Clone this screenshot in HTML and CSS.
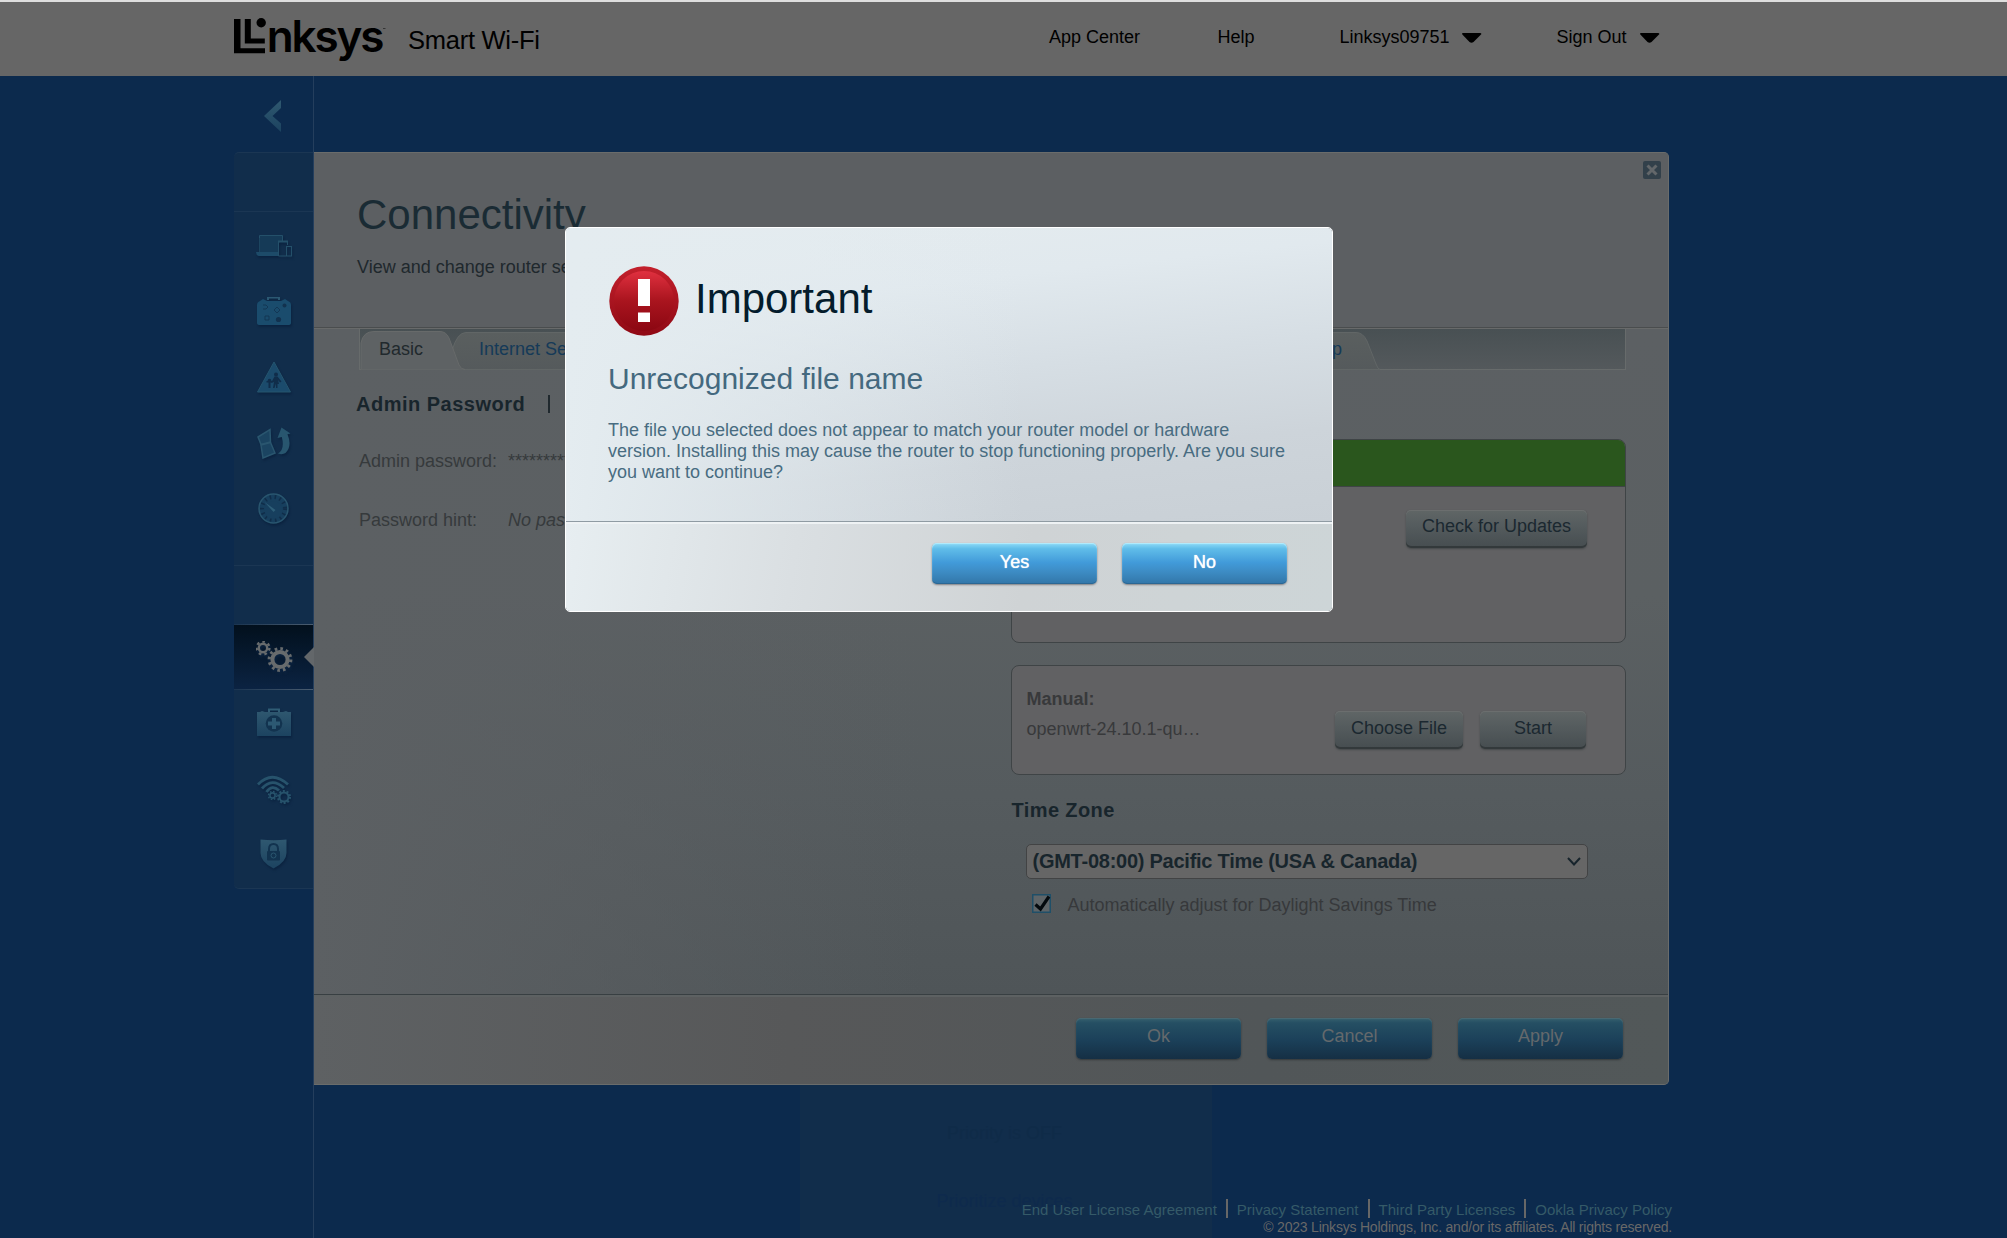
FILE: index.html
```html
<!DOCTYPE html>
<html lang="en">
<head>
<meta charset="utf-8">
<title>Linksys Smart Wi-Fi</title>
<link rel="stylesheet" href="styles.css">
</head>
<body>
<svg class="defs" width="0" height="0" aria-hidden="true">
  <defs>
    <linearGradient id="ico" x1="0" y1="0" x2="0" y2="1"><stop offset="0" stop-color="#2f5870"/><stop offset="1" stop-color="#1c4360"/></linearGradient>
    <linearGradient id="red" x1="0" y1="0" x2="0" y2="1"><stop offset="0" stop-color="#e0303f"/><stop offset=".5" stop-color="#a9141e"/><stop offset="1" stop-color="#8b0712"/></linearGradient>
    <linearGradient id="redRim" x1="0" y1="0" x2="0" y2="1"><stop offset="0" stop-color="#c3202c"/><stop offset="1" stop-color="#8f0914"/></linearGradient>
    <linearGradient id="tabFill" x1="0" y1="0" x2="0" y2="1"><stop offset="0" stop-color="#5a5f5f"/><stop offset="1" stop-color="#555a5c"/></linearGradient>
  </defs>
</svg>

<header class="topbar">
  <div class="wrap">
    <svg class="logo" width="310" height="56" viewBox="0 0 310 56">
      <path d="M0 11h6.500v29.300H31v5H0z M10.800 11h6v19.600h14v5h-20z"/>
      <circle cx="27.200" cy="14.800" r="4.700"/>
      <text class="brand" x="32.800" y="44.300" textLength="117.500" lengthAdjust="spacing">nksys</text>
      <path d="M149 20.200h2.500v.8H149z" opacity=".6"/>
      <text class="product" x="174" y="40.700" textLength="132">Smart Wi-Fi</text>
    </svg>
    <nav class="topnav">
      <a class="nav-app">App Center</a>
      <a class="nav-help">Help</a>
      <a class="nav-user">Linksys09751 <svg width="20" height="10"><path d="M0 1Q0 0 1 0H18Q20 0 19 1.500L11.500 9Q9.500 10.500 7.500 9L.8 2z"/></svg></a>
      <a class="nav-out">Sign Out <svg width="20" height="10"><path d="M0 1Q0 0 1 0H18Q20 0 19 1.500L11.500 9Q9.500 10.500 7.500 9L.8 2z"/></svg></a>
    </nav>
  </div>
</header>

<div class="widget">
  <p class="widget-state">Priority is OFF</p>
  <p class="widget-link">Prioritize devices</p>
</div>

<main class="wrap app">
  <aside class="side">
    <div class="back"><svg width="18" height="32"><path d="M17 0v8L8.500 16l8.500 7.500V32L0 16z" fill="url(#ico)"/></svg></div>
    <div class="menu">
      <div class="menu-gap top-gap"></div>
      <ul class="group first">
        <li><svg width="36" height="22" fill="none" stroke="#24506a"><path d="M3.500 17V.500H26.500V6" fill="#153a57"/><path d="M3.500 3H26v3h-3.500v11h-19z" fill="#153a57" stroke="none"/><path d="M0 17h22.500v4H2.500Q0 20 0 17z" fill="#1d4b69" stroke="none"/><path d="M31.500 10V6.500h-9V21h7.500"/><path d="M22 6.500h10" stroke-width="2"/><rect x="30.500" y="11.500" width="5" height="9.500"/></svg></li>
        <li><svg width="34" height="30"><path d="M11 3V.5h11V3" fill="none" stroke="#2b5872" stroke-width="2"/><path d="M3 4l3-2 4 2h14l4-2 3 2q3 1 3 4v18q0 2-3 2H3q-3 0-3-2V8q0-3 3-4z" fill="#1a4c6d"/><g fill="none" stroke="#12324f"><path d="M6 8h3l2 2-2 2H6M8 19h4v4H8zM17 13l3-3 3 3-3 3z" opacity=".8"/></g><circle cx="21.500" cy="22.500" r="2.600" fill="#12324f"/><circle cx="27.500" cy="8.500" r="2" fill="#12324f"/></svg></li>
        <li><svg width="34" height="32"><path d="M17 1L33.500 31H.5z" fill="#1b4b6c" stroke="#26566f" stroke-linejoin="round"/><g fill="#102d4a"><circle cx="19" cy="13.500" r="2"/><path d="M17.500 15.500h3l4 5-1.500 1-2-2.500 1 4h-1.500V27H19v-4.500L17.500 27H16l1-6-3 1z"/><circle cx="12.500" cy="19.500" r="1.800"/><path d="M9.500 20h6v1.500h-2V27h-2v-5.500h-2z"/></g></svg></li>
        <li><svg width="34" height="32"><g fill="#1b4461" stroke="#2a566f" stroke-width="1.500"><path d="M1 10L13 2.500l.5 12.500L4 17.500z"/><path d="M4 18l9.500-2.500 4.500 10.500-12 5z"/></g><path d="M20.500 11L24.500.500 33.500 6.500l-3 .7q5 12-2 18.800-3 2-7.500.5 7-4 3.800-16.500z" fill="#28566f"/></svg></li>
        <li><svg width="32" height="32"><circle cx="15.500" cy="15.500" r="14.500" fill="#173f5e" stroke="#29566f" stroke-width="1.500"/><circle cx="15.500" cy="15.500" r="11.500" fill="none" stroke="#102d49" stroke-width="4" stroke-dasharray="1.500 3.500"/><circle cx="15.500" cy="17" r="9" fill="#173f5e"/><path d="M6.500 9l11 8-2 2z" fill="#2e5e78"/></svg></li>
      </ul>
      <div class="menu-gap mid-gap"></div>
      <ul class="group second">
        <li class="active"><svg width="37" height="32" fill="none" stroke="#676b6d"><circle cx="7" cy="7" r="4.200" stroke-width="2.400"/><circle cx="7" cy="7" r="6.400" stroke-width="2.400" stroke-dasharray="2.600 3.140"/><circle cx="24" cy="18.500" r="7.600" stroke-width="4"/><circle cx="24" cy="18.500" r="10.800" stroke-width="3.200" stroke-dasharray="2.600 3.055"/></svg></li>
        <li><svg width="34" height="30"><path d="M12 4V1.500h10V4" fill="none" stroke="#2f5c75" stroke-width="2"/><path d="M0 4h3l2-1 3 1h18l3-1 2 1h3v24H0z" fill="url(#ico)"/><circle cx="17" cy="15.500" r="8.300" fill="#12334f"/><path d="M15 10h4v3.500h4v4h-4V21h-4v-3.500h-4v-4h4z" fill="#2c5973"/></svg></li>
        <li class="wifi"><svg width="34" height="30" fill="none" stroke="#27536c" stroke-width="2.800"><path d="M1 9.500Q15-5 31 9.500M5 13.500Q15 2 27 13M9.500 17Q15 9 22 15.500"/><circle cx="15.500" cy="20.500" r="2.600" stroke-width="1.600"/><circle cx="15.500" cy="20.500" r="4" stroke-width="1.500" stroke-dasharray="1.600 1.542"/><circle cx="27" cy="22" r="4.500" stroke-width="2"/><circle cx="27" cy="22" r="6" stroke-width="2" stroke-dasharray="2 1.770"/></svg></li>
        <li class="shield"><svg width="28" height="32"><path d="M.5 1.500Q14 3 26.500 1.500V15q0 9-13 15.500Q.5 24 .5 15z" fill="url(#ico)"/><path d="M9 14v-3q0-5 4.500-5t4.500 5v3" fill="none" stroke="#12334f" stroke-width="2"/><rect x="7" y="13" width="13" height="9.500" rx="1" fill="#12334f"/><circle cx="13.500" cy="17.500" r="2.500" fill="none" stroke="#2a5770"/></svg></li>
      </ul>
    </div>
  </aside>

  <section class="panel">
    <header class="panel-head">
      <div>
        <h1>Connectivity</h1>
        <p>View and change router settings</p>
      </div>
      <span class="close"><svg width="18" height="18"><rect width="18" height="18" rx="2" fill="#32404a"/><path d="M4.500 4.500l9 9m0-9l-9 9" stroke="#63676a" stroke-width="3"/></svg></span>
    </header>
    <div class="panel-body">
      <nav class="tabs">
        <div class="tab basic"><svg width="105" height="41"><path d="M1 40.500V14Q3 2.500 14 2.500H80Q86 2.500 89 9L99 36Q101 40.500 105 40.500" fill="#5e6264" stroke="#676a6a"/></svg><span>Basic</span></div>
        <div class="tab inet"><svg width="180" height="41"><path d="M5 22Q10 3.500 19 3.500H180V40.500H12z" fill="url(#tabFill)" stroke="#616666"/></svg><span>Internet Settings</span></div>
        <div class="tab setup"><svg width="180" height="41"><path d="M0 3.500H134Q141 3.500 145 12L154 35Q156 40.500 158 40.500H0" fill="url(#tabFill)" stroke="#616666"/></svg><span>CA Router Setup</span></div>
      </nav>
      <div class="cols">
        <div class="left">
          <h2>Admin Password <i></i></h2>
          <dl>
            <dt>Admin password:</dt><dd>*********</dd>
            <dt>Password hint:</dt><dd><em>No password hint</em></dd>
          </dl>
        </div>
        <div class="right">
          <div class="card auto">
            <div class="green"></div>
            <a class="btn grey check">Check for Updates</a>
          </div>
          <div class="card manual">
            <div class="file"><b>Manual:</b><span>openwrt-24.10.1-qu…</span></div>
            <a class="btn grey choose">Choose File</a>
            <a class="btn grey start">Start</a>
          </div>
          <h2>Time Zone</h2>
          <div class="select"><span>(GMT-08:00) Pacific Time (USA &amp; Canada)</span><svg width="14" height="9"><path d="M1 1l6 6.500L13 1" fill="none" stroke="#17242c" stroke-width="2"/></svg></div>
          <div class="dst"><svg width="19" height="19"><rect x=".75" y=".75" width="17.500" height="17.500" fill="#5f6568" stroke="#1f4f68" stroke-width="1.500"/><path d="M3.500 10.500l5 4.500L17 2.500" fill="none" stroke="#040a0e" stroke-width="3.200"/></svg><span>Automatically adjust for Daylight Savings Time</span></div>
        </div>
      </div>
    </div>
    <footer class="panel-foot">
      <a class="btn dim">Ok</a><a class="btn dim">Cancel</a><a class="btn dim">Apply</a>
    </footer>
  </section>
</main>

<footer class="legal">
  <p class="links"><a>End User License Agreement</a><i></i><a>Privacy Statement</a><i></i><a>Third Party Licenses</a><i></i><a>Ookla Privacy Policy</a></p>
  <p class="copy">© 2023 Linksys Holdings, Inc. and/or its affiliates. All rights reserved.</p>
</footer>

<div class="modal" role="dialog">
  <div class="modal-body">
    <div class="modal-title">
      <svg width="70" height="70"><circle cx="35" cy="35" r="34.700" fill="url(#redRim)"/><circle cx="35" cy="35" r="30" fill="url(#red)"/><path d="M29 13h12v27H29zM29 46.500h12V56H29z" fill="#fff"/></svg>
      <h2>Important</h2>
    </div>
    <h3>Unrecognized file name</h3>
    <p>The file you selected does not appear to match your router model or hardware<br>version. Installing this may cause the router to stop functioning properly. Are you sure<br>you want to continue?</p>
  </div>
  <div class="modal-foot"><a class="btn blue">Yes</a><a class="btn blue">No</a></div>
</div>
</body>
</html>
```
FILE: styles.css
```css
* { box-sizing: border-box; margin: 0; padding: 0; }
html, body { height: 1238px; overflow: hidden; }
body {
  position: relative;
  background: #0c2a4d;
  font: 18px/20px "Liberation Sans", Arial, sans-serif;
  color: #1b2a32;
}
ul { list-style: none; }
svg { display: block; flex: none; }
.defs { position: absolute; }
.wrap { width: 1435px; margin-left: 234px; display: flex; }

/* top bar */
.topbar { height: 76px; background: #666; border-top: 2px solid #dedede; }
.topbar .wrap { justify-content: flex-start; }
.logo { margin-top: 6px; fill: #000; overflow: visible; }
.brand { font: 600 44px Inter, sans-serif; }
.product { font: 25.5px "Liberation Sans", Arial, sans-serif; }
.topnav { display: flex; color: #000; padding-top: 25px; margin-left: 505px; }
.topnav a { display: flex; gap: 12px; height: 20px; white-space: nowrap; }
.topnav svg { margin-top: 6px; }
.nav-app { width: 168.500px; }
.nav-help { width: 122px; }
.nav-user { width: 217px; }
.topnav .nav-out { gap: 13px; }

/* faint widget behind the panel */
.widget {
  position: absolute; left: 800px; top: 1085px; width: 412px; height: 153px;
  background: #112d4b; text-align: center; padding: 38px 3px 0 0;
}
.widget-state { color: #0f2b48; }
.widget-link { color: #0e2a4d; margin-top: 48px; }

/* side menu */
.app { position: relative; height: 1009px; }
.side { width: 80px; height: 1162px; border-right: 1px solid #243e5d; flex: none; }
.back { height: 76px; padding: 24px 0 0 30px; }
.menu { height: 737px; background: #112d4b; border-top: 1px solid #1b3653; border-bottom: 1px solid #1b3653; border-radius: 5px 0 0 5px; }
.menu-gap { border-bottom: 1px solid #1b3653; }
.top-gap { height: 59px; }
.first { height: 354px; padding-top: 3px; border-bottom: 1px solid #1b3653; }
.mid-gap { height: 58px; border: 0; }
.menu li { height: 65.600px; display: flex; align-items: center; justify-content: center; }
.first li svg { margin-top: -3px; }
.menu li svg { filter: drop-shadow(1px 2px 1px #0b2340); }
.menu .active {
  position: relative; height: 66px; padding-left: 2px; border-top: 1px solid #44586f; border-bottom: 1px solid #44586f;
  background: linear-gradient(#02101d, #0b2342);
  border-image: linear-gradient(90deg, #1a3450, #4b5d70) 1;
}
.active::after {
  content: ""; position: absolute; right: -1px; top: 22px;
  border: 10px solid transparent; border-left: 0; border-right-color: #63676a;
}
.menu .wifi svg { margin-top: 3px; }
.menu .shield svg { margin: 1px 0 0 0; }

/* panel */
.panel {
  width: 1355px; height: 933px; display: flex; flex-direction: column;
  margin-top: 76px; border: 1px solid #6a6c6b; border-left: 0;
  border-radius: 0 5px 5px 0; overflow: hidden; background: #5c6063;
}
.panel-head { height: 175px; display: flex; justify-content: space-between; padding: 37px 7px 0 43px; border-bottom: 1px solid #4a4d4e; background: #5c5f62; }
h1 { font-weight: 400; font-size: 42px; line-height: 50px; color: #1a2b34; }
.panel-head p { margin-top: 17px; color: #20282d; }
.close { margin-top: -29px; }
.panel-body {
  flex: 1; border-top: 1px solid #686a6a; padding: 0 42px 0 45px;
  background:
    linear-gradient(90deg, #5c6063 0, rgba(92,96,99,0) 45%),
    linear-gradient(#5c6063 0, #5b6062 40%, #555b5e 70%, #4f5558);
}
.tabs {
  position: relative; height: 41px; display: flex;
  background: linear-gradient(#485053, #54595c);
  border: 1px solid #676b6b; border-top: 0;
}
.tab { position: relative; height: 40px; }
.tab svg { position: absolute; left: 0; top: 0; overflow: visible; }
.tab span { position: absolute; left: 19px; top: 10px; white-space: nowrap; }
.basic { width: 86px; z-index: 1; }
.basic span { color: #21292d; }
.inet { width: 180px; margin-left: 1px; }
.inet span, .setup span { color: #153a58; }
.inet span { left: 32px; }
.setup { margin-left: 590px; width: 180px; margin-right: auto; left: 3px; }
.setup span { left: auto; right: 58px; }
.setup svg { left: 2px; }

.cols { display: flex; }
.left { width: 653px; padding-top: 23px; }
h2 { font-size: 20px; line-height: 22px; letter-spacing: .5px; color: #18252c; }
.left h2 { margin-left: -3px; display: flex; }
.left h2 i { width: 2px; height: 18px; margin: 2px 0 0 23px; background: #20292e; }
dl { display: grid; grid-template-columns: 149px 1fr; grid-auto-rows: 20px; row-gap: 39px; margin-top: 36px; color: #363a3c; }
dd { white-space: nowrap; }
.right { width: 615px; padding-top: 69px; }
.card { border: 1px solid #3f4446; border-radius: 8px; background: #616163; overflow: hidden; }
.auto { height: 204px; }
.green { height: 47px; background: #2a561d; border-bottom: 1px solid #3f4446; }
.manual { height: 110px; margin-top: 22px; display: flex; align-items: flex-start; padding-left: 14px; }
.file { width: 308.500px; padding-top: 23px; display: flex; flex-direction: column; gap: 10px; color: #38393b; }

.btn { display: block; text-align: center; border-radius: 5px; }
.grey {
  height: 38px; line-height: 34px; color: #1b2830;
  background: linear-gradient(#606666, #555c5e 40%, #464d50);
  box-shadow: inset 0 -2px 0 #33393b, inset 0 1px 0 #6b6e6e, 0 1px 2px #45494a;
}
.check { width: 181px; line-height: 33px; margin: 23px 0 0 393.500px; }
.choose { width: 128px; margin-top: 45px; }
.start { width: 106px; margin: 45px 0 0 17px; }
.right h2 { margin-top: 24px; letter-spacing: .4px; }
.select {
  width: 562px; height: 35px; margin: 23px 0 0 15px; padding: 0 6px 0 5px;
  display: flex; align-items: center; justify-content: space-between;
  background: #666; border: 1px solid #424344; border-radius: 5px;
  font-weight: 700; font-size: 20px; letter-spacing: -.25px; color: #18252c;
}
.select span { margin-top: -1px; }
.dst { display: flex; gap: 16px; margin: 15px 0 0 21px; color: #37393b; }
.dst span { margin-top: 1px; }

.panel-foot {
  height: 90px; border-top: 1px solid #383f42; padding: 23px 45px 0 0;
  display: flex; justify-content: flex-end; gap: 26px;
  background: linear-gradient(90deg, #5e6163, #575859 35%, #515658 70%, #525859);
  box-shadow: inset 0 2px 0 #5d6162;
}
.dim, .blue { width: 165px; height: 41px; line-height: 37px; }
.dim {
  color: #64696c;
  background: linear-gradient(#36616f 0, #254f63 12%, #1b4059 55%, #152f44);
  box-shadow: inset 0 1px 1px #4c6a73, 0 1px 2px #33383a;
}

/* legal footer */
.legal { position: relative; width: 1438px; margin-left: 234px; padding-top: 114px; text-align: right; font-size: 15px; line-height: 18px; }
.links { display: flex; justify-content: flex-end; gap: 9px; height: 19px; color: #355a68; }
.links a { margin-top: 2px; }
.links i { width: 2px; height: 19px; background: #676767; }
.copy { font-size: 14px; line-height: 16px; margin-top: 1px; color: #686868; white-space: nowrap; letter-spacing: -.21px; }

/* dialog */
.modal {
  position: absolute; left: 565px; top: 227px; width: 768px; height: 385px;
  border: 1px solid #fff; border-radius: 5px; overflow: hidden;
  display: flex; flex-direction: column;
}
.modal-body {
  height: 294px; padding: 38px 0 0 43px; border-bottom: 1px solid #8f9ba3;
  background:
    linear-gradient(90deg, #e4ecf0 0, rgba(226,234,240,0) 60%),
    linear-gradient(174deg, #e5ecef 0, #e1e9ee 25%, #d6dee4 50%, #cdd4da 75%, #c9d0d6);
}
.modal-title { display: flex; }
.modal-title h2 { font-weight: 400; font-size: 42px; line-height: 50px; letter-spacing: 0; color: #041c2c; margin: 8px 0 0 16px; }
.modal h3 { font-weight: 400; font-size: 30px; line-height: 36px; color: #44697f; margin: 25px 0 0 -1px; }
.modal p { line-height: 21px; color: #486c81; margin: 23px 0 0 -1px; white-space: nowrap; }
.modal-foot {
  flex: 1; display: flex; justify-content: flex-end; gap: 25px; padding: 21px 45px 0 0;
  background: linear-gradient(100deg, #e7eef1, #dadfe2 30%, #cfd3d5 60%, #cdd5d7);
  box-shadow: inset 0 2px 0 #eef2f4;
}
.blue {
  line-height: 39px;
  color: #fff; text-shadow: 0 0 1px #fff;
  background: linear-gradient(#8fdcf7 0, #60bde9 14%, #419ad9 48%, #3d8cc4 70%, #3276a8);
  box-shadow: inset 0 1px 1px #b5ebfc, inset 0 -1px 0 #2b6794, 0 1px 2px #7f7f83;
}
```
